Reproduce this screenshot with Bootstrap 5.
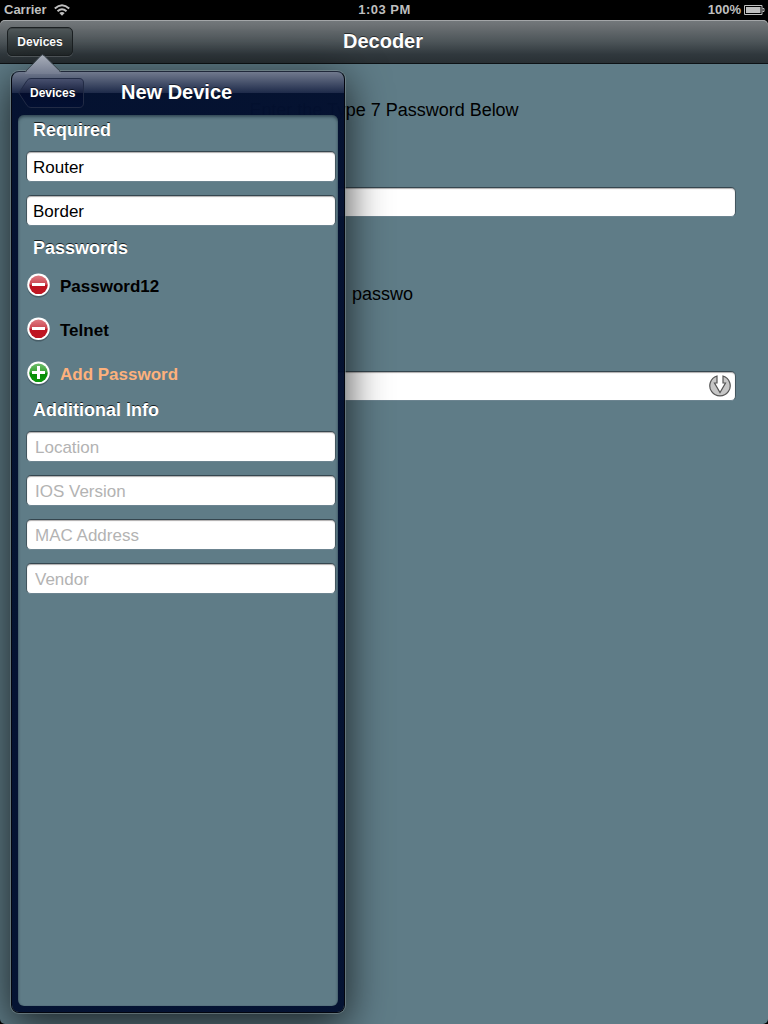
<!DOCTYPE html>
<html lang="en">
<head>
<meta charset="utf-8">
<meta name="viewport" content="width=device-width, initial-scale=1">
<title>Decoder</title>
<link href="https://cdn.jsdelivr.net/npm/bootstrap@5.3.0/dist/css/bootstrap.min.css" rel="stylesheet">
<style>
  body { font-family: "Liberation Sans", Arial, sans-serif; background: #000; color: #000; line-height: 1.2; }
  .device { width: 768px; height: 1024px; }
  .status { height: 20px; font-size: 13px; font-weight: 700; color: #bfbfbf; padding: 0 3px 0 4px; }
  .status > div { flex: 1 1 0; }
  .clock { letter-spacing: .5px; }
  .top-bar { height: 44px; padding: 0 7px; border-radius: 5px 5px 0 0; border-bottom: 1px solid #0d1215;
    background: linear-gradient(#757a7d 0, #6a6f72 15%, #4d5559 50%, #30383d 80%, #293034 100%); box-shadow: inset 0 1px #a3a6a8; }
  .bar-title { font-size: 20px; font-weight: 700; color: #fff; padding-bottom: 2px; text-shadow: 0 -1px rgba(0,0,0,.55); }
  .bar-btn { width: 66px; height: 29px; padding: 1px 0 0; font-size: 12px; font-weight: 700; color: #fff; line-height: 27px;
    border: 1px solid #1b2022; border-radius: 5px; background: linear-gradient(#51595b, #373e40 50%, #23292b);
    box-shadow: 0 1px rgba(255,255,255,.18), inset 0 1px rgba(0,0,0,.2); text-shadow: 0 -1px rgba(0,0,0,.5); }
  .bar-spacer { width: 68px; }
  .canvas { background: #5f7c87; border-radius: 0 0 5px 5px; padding: 0 33px; font-size: 18px; }
  .field { border: 1px solid #43565f; border-top-color: #35464f; border-bottom-color: #6c8490; border-radius: 5px; background: #fff;
    box-shadow: inset 0 1px 1px #b0adad; color: #000; font-size: 17px; line-height: 20px; }
  .field:focus { box-shadow: inset 0 1px 1px #b0adad; border-color: #43565f; }
  .field::placeholder { color: #b3b3b3; opacity: 1; }
  .wide { height: 30px; }
  .canvas .field { width: 703px; padding: 0 4px; }
  .caption-top-line { padding-top: 35px; line-height: 22px; letter-spacing: -.02px; }
  .first-field { margin-top: 66px; }
  .result { padding: 66px 0 66px 319px; line-height: 22px; }
  .pop { position: absolute; left: 11px; top: 71px; width: 334px; height: 942px; border-radius: 8px;
    border: 1px solid #03060f; border-top-color: #20283a;
    background: linear-gradient(rgba(113,121,141,.98) 0, rgba(77,87,112,.98) 9px, rgba(28,40,72,.98) 21px, rgba(3,16,47,.98) 21px, rgba(3,17,49,.98) 100%);
    background-clip: padding-box;
    box-shadow: 0 0 0 1px rgba(140,155,160,.5), 0 10px 42px 2px rgba(0,0,0,.72); padding: 0 6px 6px; }
  .pop-arrow { position: absolute; left: 13px; top: -19px; }
  .pop-head { height: 43px; }
  .pop-title { margin-left: 37px; padding-bottom: 4px; }
  .back { position: relative; width: 66px; height: 30px; margin-top: -1px; color: #fff; font-size: 12px; font-weight: 700; }
  .back svg { position: absolute; left: 0; top: 0; }
  .back span { position: relative; display: block; padding-left: 12px; line-height: 30px; text-shadow: 0 -1px rgba(0,0,0,.6); }
  .sheet { background: #5f7c87; border-radius: 6px; box-shadow: inset 0 2px 3px rgba(10,25,40,.5), inset 0 0 1px rgba(10,25,40,.5); padding: 0 2px 0 8px; }
  .group-title { padding-left: 7px; margin: 0; font-size: 18px; font-weight: 700; line-height: 22px; color: #fff; text-shadow: 0 -1px rgba(0,0,0,.75); }
  .g1 { padding-top: 4px; margin-bottom: 10px; }
  .g2 { padding-top: 11px; margin-bottom: 5px; }
  .g3 { padding-top: 3px; margin-bottom: 10px; }
  .stack { display: grid; gap: 13px; }
  .stack .field { height: 31px; padding: 3px 6px 0; }
  .stack .blank { padding-left: 8px; }
  .entry { height: 44px; font-size: 17px; font-weight: 700; gap: 8px; padding-left: 1px; }
  .entry svg { flex: none; }
  .entry span { padding-top: 2px; }
  .add { color: #fdb17c; }
</style>
</head>
<body>
<div class="device position-relative d-flex flex-column overflow-hidden">
  <header class="status d-flex align-items-center">
    <div class="d-flex align-items-center gap-2"><span>Carrier</span>
      <svg style="margin-left:-1px" width="16" height="12" viewBox="0 0 16 12" fill="none" stroke="#bfbfbf" stroke-width="2"><path d="M.8 4.500Q8-2 15.200 4.500M3.500 7.300Q8 3.200 12.500 7.300"/><path d="M5.300 9Q8 6.800 10.700 9L8 11.800Z" fill="#bfbfbf" stroke="none"/></svg>
    </div>
    <div class="text-center clock">1:03 PM</div>
    <div class="d-flex align-items-center justify-content-end"><span>100%</span>
      <svg style="margin-left:3px" width="21" height="10" viewBox="0 0 21 10"><path d="M.5.5h17.500v9H.5zM18.500 3.500h1.500v3h-1.500" fill="none" stroke="#bfbfbf"/><path d="M2 2h14.500v6H2z" fill="#bfbfbf"/></svg>
    </div>
  </header>
  <nav class="top-bar d-flex align-items-center">
    <button class="btn bar-btn" type="button">Devices</button>
    <div class="bar-title flex-fill text-center">Decoder</div>
    <div class="bar-spacer" aria-hidden="true"></div>
  </nav>
  <main class="canvas flex-fill">
    <p class="caption-top-line text-center mb-0">Enter the Type 7 Password Below</p>
    <input class="form-control field wide first-field" aria-label="Encoded password">
    <p class="result mb-0">passwo</p>
    <div class="form-control field wide d-flex align-items-center justify-content-end">
      <svg width="22" height="22" viewBox="0 0 22 22"><path d="M8 1A10.200 10.200 0 1 0 14 1V8h2.500L11 17.500 5.500 8H8Z" fill="#c6c6c6" stroke="#555" stroke-width="1.200"/></svg>
    </div>
  </main>

  <section class="pop d-flex flex-column">
    <svg class="pop-arrow" width="36" height="21" viewBox="0 0 36 21">
      <defs><linearGradient id="tip" x1="0" y1="0" x2="0" y2="1"><stop stop-color="#a9afba"/><stop offset="1" stop-color="#747c90"/></linearGradient></defs>
      <path d="M0 20L15.500 3Q17.500 .5 19.500 3L36 20V21H0Z" fill="url(#tip)"/>
      <path d="M0 19L15.500 3Q17.500 .5 19.500 3L36 19" fill="none" stroke="#3c464d"/>
    </svg>
    <div class="pop-head d-flex align-items-center">
      <div class="back">
        <svg width="66" height="30" viewBox="0 0 66 30"><defs><linearGradient id="bk" x1="0" y1="0" x2="0" y2="1"><stop stop-color="#4a5270"/><stop offset=".49" stop-color="#18213f"/><stop offset=".5" stop-color="#030c2c"/><stop offset="1" stop-color="#020f32"/></linearGradient></defs>
          <path d="M13 .5H61Q65.500 .5 65.500 5V25Q65.500 29.500 61 29.500H13Q10.500 29.500 9 27.500L.8 15 9 2.500Q10.500.5 13 .5Z" fill="url(#bk)" stroke="#222b45"/></svg>
        <span>Devices</span>
      </div>
      <div class="bar-title pop-title">New Device</div>
    </div>
    <form class="sheet flex-fill">
      <h2 class="group-title g1">Required</h2>
      <div class="stack">
        <input class="form-control field" value="Router" aria-label="Name">
        <input class="form-control field" value="Border" aria-label="Role">
      </div>
      <h2 class="group-title g2">Passwords</h2>
      <div class="d-flex align-items-center entry">
        <svg width="25" height="26" viewBox="0 0 25 26"><defs><linearGradient id="red" x1="0" y1="0" x2="0" y2="1"><stop stop-color="#df7b82"/><stop offset=".48" stop-color="#cb4651"/><stop offset=".52" stop-color="#bd1421"/><stop offset="1" stop-color="#c01622"/></linearGradient></defs><circle cx="11.500" cy="13" r="11.500" fill="#394b54" opacity=".6"/><circle cx="11.500" cy="11.800" r="11.300" fill="#fff"/><circle cx="11.500" cy="11.800" r="9.300" fill="url(#red)"/><path d="M5 10h13v3H5z" fill="#fff"/></svg>
        <span>Password12</span>
      </div>
      <div class="d-flex align-items-center entry">
        <svg width="25" height="26" viewBox="0 0 25 26"><circle cx="11.500" cy="13" r="11.500" fill="#394b54" opacity=".6"/><circle cx="11.500" cy="11.800" r="11.300" fill="#fff"/><circle cx="11.500" cy="11.800" r="9.300" fill="url(#red)"/><path d="M5 10h13v3H5z" fill="#fff"/></svg>
        <span>Telnet</span>
      </div>
      <div class="d-flex align-items-center entry">
        <svg width="25" height="26" viewBox="0 0 25 26"><defs><linearGradient id="green" x1="0" y1="0" x2="0" y2="1"><stop stop-color="#70bd6c"/><stop offset=".48" stop-color="#36a333"/><stop offset=".52" stop-color="#078c05"/><stop offset="1" stop-color="#0b980b"/></linearGradient></defs><circle cx="11.500" cy="13" r="11.500" fill="#394b54" opacity=".6"/><circle cx="11.500" cy="11.800" r="11.300" fill="#fff"/><circle cx="11.500" cy="11.800" r="9.300" fill="url(#green)"/><path d="M5 10h5V5h3v5h5v3h-5v5h-3v-5H5z" fill="#fff"/></svg>
        <span class="add">Add Password</span>
      </div>
      <h2 class="group-title g3">Additional Info</h2>
      <div class="stack">
        <input class="form-control field blank" placeholder="Location">
        <input class="form-control field blank" placeholder="IOS Version">
        <input class="form-control field blank" placeholder="MAC Address">
        <input class="form-control field blank" placeholder="Vendor">
      </div>
    </form>
  </section>
</div>
</body>
</html>
